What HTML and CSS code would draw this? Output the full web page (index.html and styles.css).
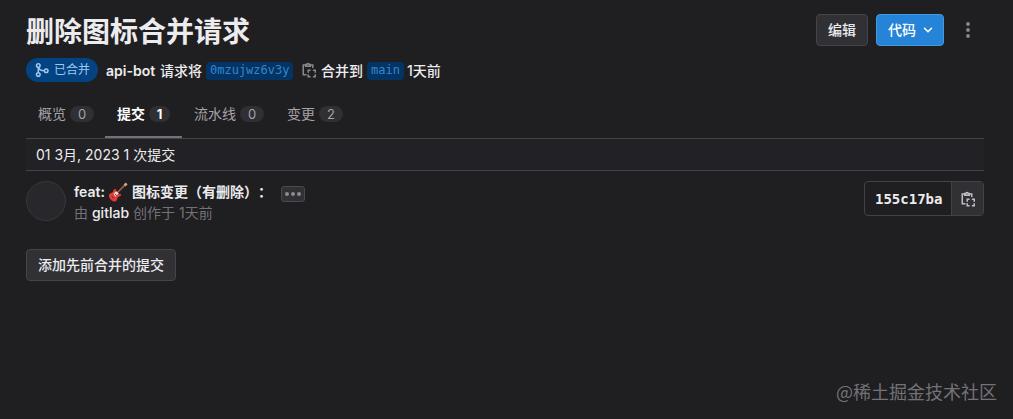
FILE: index.html
```html
<!DOCTYPE html>
<html lang="zh-CN">
<head>
  <meta charset="UTF-8" />
  <meta name="viewport" content="width=device-width, initial-scale=1.0"/>
  <title>删除图标合并请求</title>
  <link rel="stylesheet" href="styles.css">
</head>
<body>
  <svg width="0" height="0" class="sprite">
    <symbol id="icon-copy" viewBox="0 0 16 16">
      <g fill="none" stroke="currentColor" stroke-width="1.500">
        <path d="M4.500 3H2.250v9.750H5.500M10 3h1.750v3M4.750 4.250h4.500V2.500H8.050a1.050 1.050 0 0 0-2.100 0H4.750z"/>
        <path d="M7.250 10.700V8.250H9.600M11.900 8.250h2.350v2.450M14.250 12.300v2.450H11.900M9.600 14.750H7.250V12.300"/>
      </g>
    </symbol>
  </svg>

  <div class="container">
    <header class="header">
      <h1>删除图标合并请求</h1>
      <div class="actions">
        <button class="btn">编辑</button>
        <button class="btn btn-confirm">代码
          <svg width="16" height="16" viewBox="0 0 16 16"><path d="M4.500 6.300L8 9.800l3.500-3.500" fill="none" stroke="currentColor" stroke-width="1.600" stroke-linecap="round" stroke-linejoin="round"/></svg>
        </button>
        <button class="more">
          <svg width="16" height="16" viewBox="0 0 16 16" fill="currentColor"><circle cx="8" cy="2" r="1.900"/><circle cx="8" cy="8" r="1.900"/><circle cx="8" cy="14" r="1.900"/></svg>
        </button>
      </div>
    </header>

    <div class="meta">
      <span class="status">
        <svg width="16" height="16" viewBox="0 0 16 16" fill="none" stroke="currentColor" stroke-width="1.500"><circle cx="4.300" cy="3.500" r="1.800"/><circle cx="4.300" cy="12.500" r="1.800"/><circle cx="12.200" cy="8.700" r="1.800"/><path d="M4.300 5.200v5.600M4.300 5.200c.6 2.200 2.800 3.500 6 3.500"/></svg>
        已合并
      </span>
      <strong class="author">api-bot</strong>
      <span class="request">请求将</span>
      <code class="branch source">0mzujwz6v3y</code>
      <svg class="copy" width="16" height="16"><use href="#icon-copy"/></svg>
      <span class="into">合并到</span>
      <code class="branch target">main</code>
      <span>1天前</span>
    </div>

    <nav class="tabs">
      <a class="tab tab-overview">概览 <span class="count">0</span></a>
      <a class="tab tab-commits active">提交 <span class="count">1</span></a>
      <a class="tab tab-pipelines">流水线 <span class="count">0</span></a>
      <a class="tab">变更 <span class="count">2</span></a>
    </nav>

    <div class="day">01 3月, 2023 1 次提交</div>

    <div class="commit">
      <div class="avatar"></div>
      <div class="commit-info">
        <div class="commit-title">
          <span>feat:</span>
          <svg class="guitar" width="20" height="20" viewBox="0 0 20 20">
            <path d="M8.500 11.500L17 2.800" stroke="#9b6044" stroke-width="1.700"/>
            <path d="M15.600 2.700l2-2.200 2 1.700-2 2.400z" fill="#d7a283"/>
            <path d="M1.200 12.300c1-1.500 2.800-1 3.600-2.200.7-1.200.7-2.900 2.400-3 1-.1 1.200.8.7 2l3.200 3.100c1.300-.7 2.200-.4 1.900.7-.4 1.600-2.300 1.400-3.200 2.500-.9 1-.5 2.900-2 3.800-2.700 1.500-8.200-3.200-6.600-6.900z" fill="#e23b35"/>
            <path d="M5.500 11.600l3-2.300 2.200 2.300-3.500 3.200z" fill="#f3dedb"/>
            <path d="M4 14.500l2 1.700M6.800 11.800l1.900 1.700" stroke="#693034" stroke-width="1"/>
          </svg>
          <span>图标变更（有删除）：</span>
          <button class="ellipsis"><i></i><i></i><i></i></button>
        </div>
        <div class="commit-by">由 <span class="name">gitlab</span> 创作于 1天前</div>
      </div>
      <div class="sha-group">
        <span class="sha">155c17ba</span>
        <button class="sha-copy"><svg width="16" height="16"><use href="#icon-copy"/></svg></button>
      </div>
    </div>

    <button class="btn add-commits">添加先前合并的提交</button>
  </div>

  <div class="watermark">@稀土掘金技术社区</div>
</body>
</html>
```

FILE: styles.css
```css
* {
  box-sizing: border-box;
}
body {
  margin: 0;
  height: 419px;
  overflow: hidden;
  position: relative;
  background-color: #1f1e21;
  color: #ececef;
  font: 14px/20px Inter, "Noto Sans CJK SC", sans-serif;
  text-spacing-trim: space-all;
}
button {
  font: inherit;
  color: inherit;
  padding: 0;
}
svg {
  flex: none;
}
.sprite {
  position: absolute;
}
.container {
  padding: 14px 29px 0 26px;
}
.header {
  display: flex;
  justify-content: space-between;
  height: 44px;
}
h1 {
  margin: 0;
  font-size: 28px;
  line-height: 37px;
  font-weight: 700;
}
.actions {
  display: flex;
  gap: 8px;
  align-items: flex-start;
}
.btn {
  height: 32px;
  padding: 0 11px;
  display: flex;
  align-items: center;
  border: 1px solid #45444b;
  border-radius: 4px;
  background: #303035;
  font-weight: 500;
  white-space: nowrap;
}
.btn-confirm {
  width: 68px;
  padding-right: 7px;
  gap: 4px;
  background: #2584d8;
  border-color: #4799de;
  color: #fff;
}
.more {
  width: 32px;
  height: 32px;
  display: flex;
  align-items: center;
  justify-content: center;
  background: none;
  border: 0;
  color: #89888d;
}
.meta {
  display: flex;
  align-items: center;
  height: 26px;
  font-weight: 500;
  white-space: nowrap;
}
.status {
  display: flex;
  align-items: center;
  gap: 4px;
  width: 72px;
  height: 24px;
  padding-left: 8px;
  margin: 0 8px 2px 0;
  border-radius: 12px;
  background: #044381;
  color: #9dc7f1;
  font-size: 12px;
  font-weight: 400;
}
.author {
  width: 54px;
  font-weight: 600;
}
.request {
  width: 46px;
}
.branch {
  height: 18px;
  padding: 0 4px;
  border-radius: 4px;
  background: #033464;
  color: #3586cc;
  font: 12px/17px "DejaVu Sans Mono", monospace;
}
.source {
  width: 87px;
}
.copy {
  margin: 0 4px 2px 8px;
  color: #89888d;
}
.into {
  width: 46px;
}
.target {
  width: 37px;
  margin-right: 3px;
}
.tabs {
  display: flex;
  height: 55px;
  border-bottom: 1px solid #434248;
}
.tab {
  display: flex;
  align-items: center;
  gap: 4px;
  padding: 6px 0 0 12px;
  height: 54px;
  color: #a4a3a8;
  white-space: nowrap;
}
.tab.active {
  border-bottom: 2px solid #737278;
  padding-top: 8px;
  color: #fff;
  font-weight: 700;
}
.tab-overview {
  width: 79px;
}
.tab-commits {
  width: 77px;
}
.tab-pipelines {
  width: 93px;
}
.count {
  flex: none;
  width: 24px;
  height: 16px;
  border-radius: 8px;
  background: #302f34;
  font-size: 13px;
  line-height: 17px;
  text-align: center;
}
.active .count {
  width: 21px;
}
.day {
  height: 32px;
  padding: 0 10px;
  border-bottom: 1px solid #434248;
  background: #222125;
  line-height: 32px;
}
.commit {
  display: flex;
  height: 78px;
  padding-top: 10px;
}
.avatar {
  width: 40px;
  height: 40px;
  margin-right: 8px;
  border: 1px solid #38373c;
  border-radius: 50%;
  background: #28272c;
}
.commit-info {
  flex: 1;
}
.commit-title {
  display: flex;
  align-items: center;
  height: 22px;
  font-weight: 600;
}
.guitar {
  margin: 0 4px 1px 3px;
}
.ellipsis {
  display: flex;
  align-items: center;
  justify-content: center;
  gap: 2px;
  width: 24px;
  height: 16px;
  margin: 4px 0 0 9px;
  border: 1px solid #4a494f;
  border-radius: 3px;
  background: #303035;
}
.ellipsis i {
  width: 4px;
  height: 4px;
  border-radius: 50%;
  background: #8c8b90;
}
.commit-by {
  color: #737278;
}
.name {
  color: #ececef;
  font-weight: 500;
}
.sha-group {
  display: flex;
  width: 120px;
  height: 35px;
  border: 1px solid #434248;
  border-radius: 4px;
  overflow: hidden;
}
.sha {
  flex: 1;
  padding-left: 10px;
  font: bold 14px/34px "DejaVu Sans Mono", monospace;
}
.sha-copy {
  display: flex;
  align-items: center;
  justify-content: center;
  width: 32px;
  border: 0;
  border-left: 1px solid #434248;
  background: #303035;
  color: #bfbfc3;
}
.watermark {
  position: absolute;
  right: 16px;
  bottom: 16px;
  color: #737277;
  font: 18px/24px "Noto Sans CJK SC", sans-serif;
}
```
